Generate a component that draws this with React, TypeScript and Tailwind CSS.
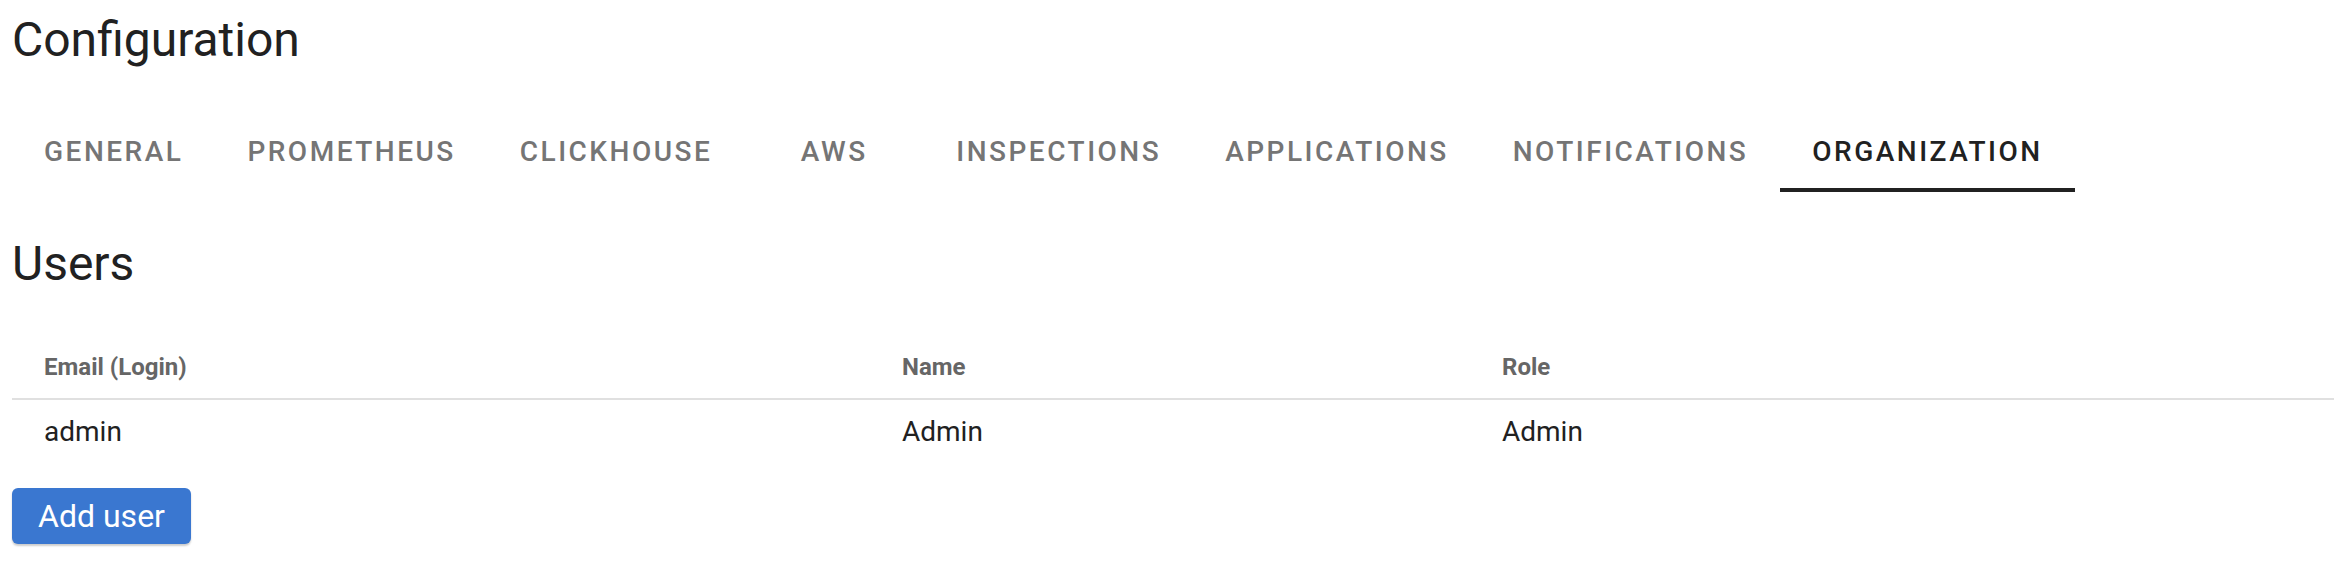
import React from "react"

const tabs = [
  "General",
  "Prometheus",
  "Clickhouse",
  "AWS",
  "Inspections",
  "Applications",
  "Notifications",
  "Organization",
]

const users = [{ email: "admin", name: "Admin", role: "Admin" }]

export default function App() {
  return (
    <div className="min-h-[566px] bg-white px-[12px] pt-[8px] text-[#212121] font-['Roboto',sans-serif]">
      <h1 className="text-[48px] leading-[64px] font-normal">Configuration</h1>

      <div className="mt-[40px] flex h-[80px]">
        {tabs.map((t, i) => {
          const active = i === tabs.length - 1
          return (
            <div
              key={t}
              className={
                "relative flex min-w-[180px] items-center justify-center px-[32px] text-[28px] font-medium uppercase tracking-[0.0892em] " +
                (active ? "text-[#212121]" : "text-[#757575]")
              }
            >
              {t}
              {active && <div className="absolute bottom-0 left-0 right-0 h-[4px] bg-[#212121]" />}
            </div>
          )
        })}
      </div>

      <h2 className="mt-[40px] text-[48px] leading-[64px] font-normal">Users</h2>

      <div className="mt-[40px]">
        <div className="grid h-[64px] grid-cols-[858px_600px_1fr] items-center border-b-2 border-[#e0e0e0] text-[24px] font-bold text-[#666666]">
          <div className="px-[32px]">Email (Login)</div>
          <div className="px-[32px]">Name</div>
          <div className="px-[32px]">Role</div>
        </div>
        {users.map((u) => (
          <div key={u.email} className="grid h-[64px] grid-cols-[858px_600px_1fr] items-center text-[28px]">
            <div className="px-[32px]">{u.email}</div>
            <div className="px-[32px]">{u.name}</div>
            <div className="px-[32px]">{u.role}</div>
          </div>
        ))}
      </div>

      <button className="mt-[24px] flex h-[56px] w-[179px] items-center justify-center rounded-[6px] bg-[#3a77d0] text-[32px] text-white shadow-[0_2px_2px_rgba(0,0,0,0.2)]">
        Add user
      </button>
    </div>
  )
}
